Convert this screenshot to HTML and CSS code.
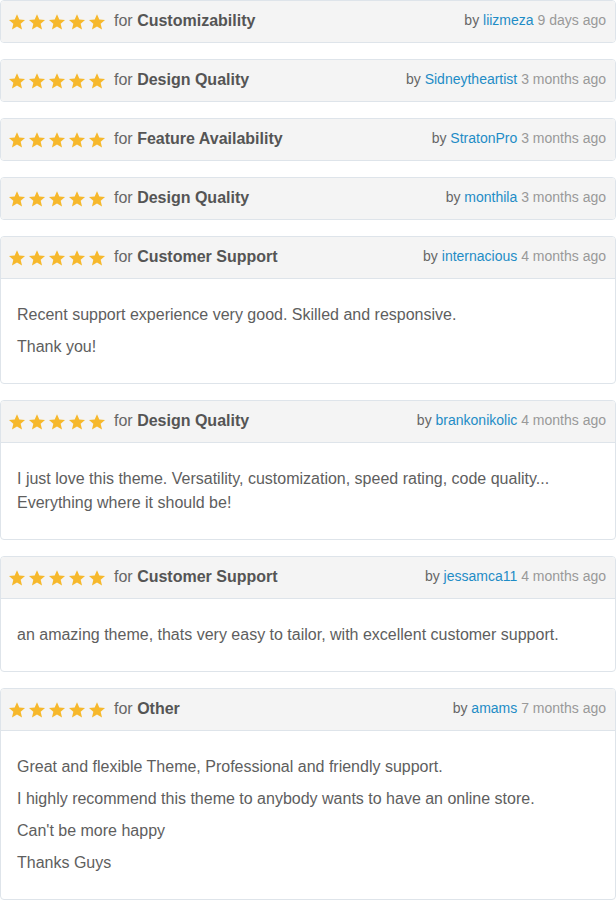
FILE: index.html
```html
<!DOCTYPE html>
<html lang="en">
<head>
  <meta charset="UTF-8">
  <meta name="viewport" content="width=device-width, initial-scale=1">
  <title>Reviews</title>
  <link rel="stylesheet" href="styles.css">
</head>
<body>
<svg width="0" height="0" style="position:absolute">
  <symbol id="star" viewBox="0 0 24 24">
    <path d="M12 1.5l3.1 7.1 7.6.7-5.8 5.1 1.8 7.5L12 17.9l-6.7 4 1.8-7.5-5.8-5.1 7.6-.7z"/>
  </symbol>
</svg>

<div id="reviews"></div>

<script>
  const REVIEWS = [
    { cat: 'Customizability', user: 'liizmeza', when: '9 days ago' },
    { cat: 'Design Quality', user: 'Sidneytheartist', when: '3 months ago' },
    { cat: 'Feature Availability', user: 'StratonPro', when: '3 months ago' },
    { cat: 'Design Quality', user: 'monthila', when: '3 months ago' },
    { cat: 'Customer Support', user: 'internacious', when: '4 months ago',
      text: ['Recent support experience very good. Skilled and responsive.', 'Thank you!'] },
    { cat: 'Design Quality', user: 'brankonikolic', when: '4 months ago',
      text: ['I just love this theme. Versatility, customization, speed rating, code quality... Everything where it should be!'] },
    { cat: 'Customer Support', user: 'jessamca11', when: '4 months ago',
      text: ['an amazing theme, thats very easy to tailor, with excellent customer support.'] },
    { cat: 'Other', user: 'amams', when: '7 months ago',
      text: ['Great and flexible Theme, Professional and friendly support.',
             'I highly recommend this theme to anybody wants to have an online store.',
             'Can\'t be more happy', 'Thanks Guys'] }
  ];

  const listEl = document.getElementById('reviews');

  function stars() {
    let html = '';
    for (let i = 0; i < 5; i++) html += '<svg class="star"><use href="#star"/></svg>';
    return html;
  }

  REVIEWS.forEach(r => {
    const card = document.createElement('div');
    card.className = 'review';
    let html = '<div class="review-head">' +
      '<div class="rating">' + stars() + '<span class="for">for <strong>' + r.cat + '</strong></span></div>' +
      '<div class="meta">by <a href="#">' + r.user + '</a> <span class="when">' + r.when + '</span></div>' +
      '</div>';
    if (r.text) {
      html += '<div class="review-body">' + r.text.map(t => '<p>' + t + '</p>').join('') + '</div>';
    }
    card.innerHTML = html;
    listEl.appendChild(card);
  });
</script>
</body>
</html>
```

FILE: styles.css
```css
body {
  margin: 0;
  font-family: "Liberation Sans", Arial, sans-serif;
  color: #666;
  background: #fff;
}
.review {
  border: 1px solid #dee4ea;
  border-radius: 4px;
  margin-bottom: 16px;
  background: #fff;
  overflow: hidden;
}
.review-head {
  height: 41px;
  display: flex;
  align-items: center;
  justify-content: space-between;
  padding: 0 9px 0 7px;
  background: #f4f4f4;
}
.rating {
  display: flex;
  align-items: center;
}
.star {
  width: 18px;
  height: 18px;
  margin-right: 2px;
  fill: #f6b82c;
}
.for {
  margin-left: 6px;
  font-size: 16px;
  color: #666;
  padding-bottom: 2px;
}
.for strong {
  color: #555;
}
.meta {
  font-size: 14px;
  color: #666;
  padding-bottom: 3px;
}
.meta a {
  color: #1e8cc6;
  text-decoration: none;
}
.when {
  color: #999;
}
.review-body {
  border-top: 1px solid #dee4ea;
  padding: 24px 16px 16px;
}
.review-body p {
  margin: 0 0 8px;
  font-size: 16px;
  line-height: 24px;
  color: #5e5e5e;
}
```
